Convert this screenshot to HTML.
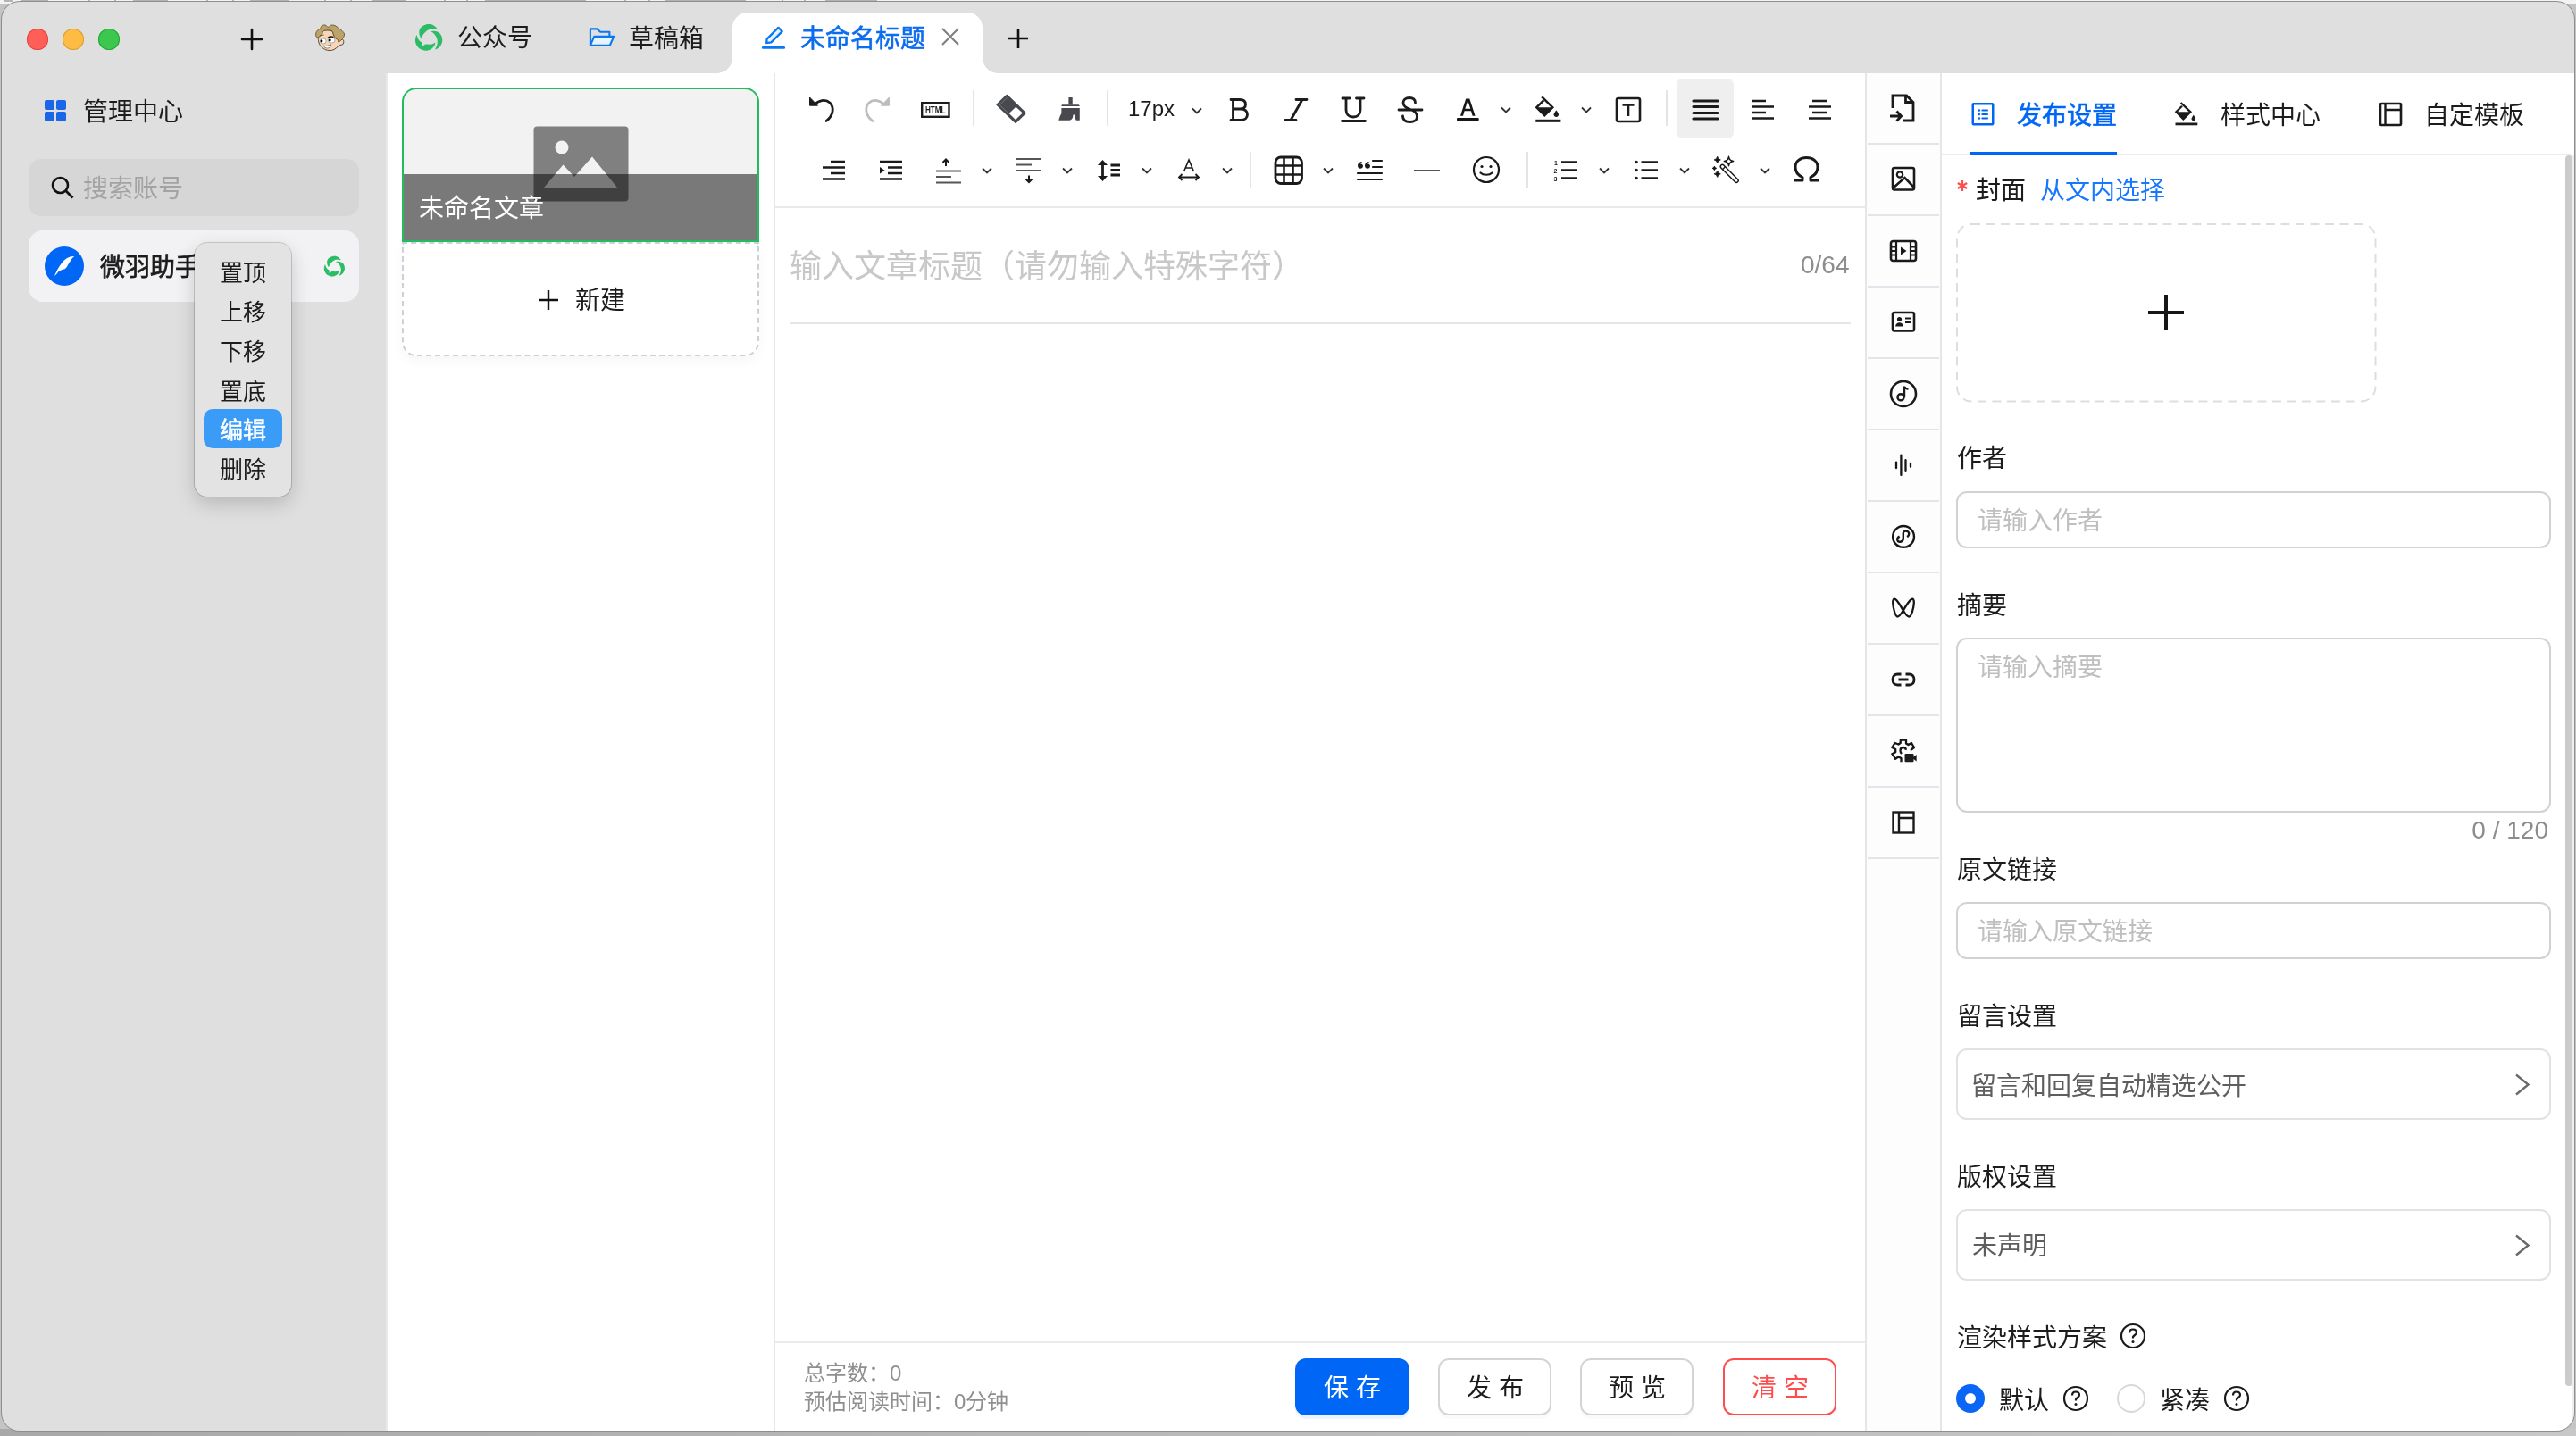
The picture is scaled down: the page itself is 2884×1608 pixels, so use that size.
<!DOCTYPE html>
<html lang="zh-CN">
<head>
<meta charset="utf-8">
<style>
*{box-sizing:border-box;margin:0;padding:0}
html,body{width:2884px;height:1608px;overflow:hidden;background:#c4c4c4;font-family:"Liberation Sans",sans-serif;color:#1f1f1f}
.a{position:absolute}
.t{position:absolute;white-space:nowrap;line-height:1}
#ring{position:absolute;left:1px;top:1px;width:2882px;height:1602px;border-radius:21px;background:#8e8e8e}
#win{position:absolute;left:0;top:0;width:2884px;height:1608px;will-change:transform;clip-path:inset(2px 2px 6px 2px round 20px);background:#dfdfdf}
svg{position:absolute;overflow:visible}
</style>
</head>
<body>
<div class="a" style="left:0;top:0;width:2884px;height:4px;background:#f3f3f3"></div>
<div class="a" style="left:0;top:1600px;width:2884px;height:8px;background:linear-gradient(90deg,#a8a8a8,#b8b8b8 40%,#c8c8c8)"></div>
<div class="a" style="left:4px;top:0;width:11px;height:2px;background:#b4b4b4"></div><div class="a" style="left:23px;top:0;width:31px;height:2px;background:#b4b4b4"></div><div class="a" style="left:99px;top:0;width:2px;height:2px;background:#b4b4b4"></div><div class="a" style="left:128px;top:0;width:2px;height:2px;background:#b4b4b4"></div><div class="a" style="left:149px;top:0;width:39px;height:2px;background:#b4b4b4"></div><div class="a" style="left:231px;top:0;width:2px;height:2px;background:#b4b4b4"></div><div class="a" style="left:260px;top:0;width:2px;height:2px;background:#b4b4b4"></div><div class="a" style="left:280px;top:0;width:44px;height:2px;background:#b4b4b4"></div><div class="a" style="left:363px;top:0;width:2px;height:2px;background:#b4b4b4"></div><div class="a" style="left:392px;top:0;width:2px;height:2px;background:#b4b4b4"></div><div class="a" style="left:417px;top:0;width:37px;height:2px;background:#b4b4b4"></div><div class="a" style="left:497px;top:0;width:2px;height:2px;background:#b4b4b4"></div><div class="a" style="left:522px;top:0;width:2px;height:2px;background:#b4b4b4"></div><div class="a" style="left:543px;top:0;width:113px;height:2px;background:#b4b4b4"></div><div class="a" style="left:699px;top:0;width:2px;height:2px;background:#b4b4b4"></div><div class="a" style="left:726px;top:0;width:2px;height:2px;background:#b4b4b4"></div><div class="a" style="left:745px;top:0;width:90px;height:2px;background:#b4b4b4"></div><div class="a" style="left:875px;top:0;width:2px;height:2px;background:#b4b4b4"></div><div class="a" style="left:900px;top:0;width:2px;height:2px;background:#b4b4b4"></div><div class="a" style="left:924px;top:0;width:58px;height:2px;background:#b4b4b4"></div>
<div id="ring"></div>
<div id="win">
<!-- traffic lights -->
<div class="a" style="left:30px;top:32px;width:24px;height:24px;border-radius:50%;background:#ff5f57;box-shadow:inset 0 0 0 1px #e0443e"></div>
<div class="a" style="left:70px;top:32px;width:24px;height:24px;border-radius:50%;background:#febc45;box-shadow:inset 0 0 0 1px #dc9d28"></div>
<div class="a" style="left:110px;top:32px;width:24px;height:24px;border-radius:50%;background:#3cc84f;box-shadow:inset 0 0 0 1px #1fa532"></div>
<!-- plus -->
<svg style="left:270px;top:32px" width="24" height="24" viewBox="0 0 24 24"><path d="M12 1V23M1 12H23" stroke="#111" stroke-width="2.6" stroke-linecap="round"/></svg>
<!-- avatar -->
<svg style="left:350px;top:24px" width="40" height="38" viewBox="0 0 40 38">
<path d="M6.50 18.00 C6.05 19.42 6.47 21.50 6.80 23.00 C7.13 24.50 7.80 25.92 8.50 27.00 C9.20 28.08 10.00 28.72 11.00 29.50 C12.00 30.28 13.17 31.18 14.50 31.70 C15.83 32.22 17.42 32.63 19.00 32.60 C20.58 32.57 22.42 32.27 24.00 31.50 C25.58 30.73 27.33 28.83 28.50 28.00 C29.67 27.17 30.08 26.92 31.00 26.50 C31.92 26.08 33.37 26.17 34.00 25.50 C34.63 24.83 34.88 23.42 34.80 22.50 C34.72 21.58 34.30 20.33 33.50 20.00 C32.70 19.67 31.08 20.67 30.00 20.50 C28.92 20.33 28.00 19.75 27.00 19.00 C26.00 18.25 25.00 17.42 24.00 16.00 C23.00 14.58 23.00 11.45 21.00 10.50 C19.00 9.55 13.92 9.63 12.00 10.30 C10.08 10.97 10.42 13.22 9.50 14.50 C8.58 15.78 6.95 16.58 6.50 18.00Z" fill="#f6d6b8" stroke="#4a3a2a" stroke-width="0.9"/>
<path d="M4.00 17.00 C3.55 16.20 3.55 14.17 3.80 13.00 C4.05 11.83 4.63 10.92 5.50 10.00 C6.37 9.08 8.25 8.33 9.00 7.50 C9.75 6.67 9.17 5.58 10.00 5.00 C10.83 4.42 12.75 3.78 14.00 4.00 C15.25 4.22 16.42 6.27 17.50 6.30 C18.58 6.33 19.25 4.50 20.50 4.20 C21.75 3.90 23.58 3.95 25.00 4.50 C26.42 5.05 27.67 6.50 29.00 7.50 C30.33 8.50 31.92 9.42 33.00 10.50 C34.08 11.58 35.25 12.75 35.50 14.00 C35.75 15.25 35.08 16.83 34.50 18.00 C33.92 19.17 32.95 20.13 32.00 21.00 C31.05 21.87 29.42 23.28 28.80 23.20 C28.18 23.12 28.85 21.20 28.30 20.50 C27.75 19.80 26.30 19.92 25.50 19.00 C24.70 18.08 24.08 16.33 23.50 15.00 C22.92 13.67 22.67 11.83 22.00 11.00 C21.33 10.17 21.08 10.08 19.50 10.00 C17.92 9.92 14.00 9.75 12.50 10.50 C11.00 11.25 11.17 13.58 10.50 14.50 C9.83 15.42 9.17 15.45 8.50 16.00 C7.83 16.55 7.25 17.63 6.50 17.80 C5.75 17.97 4.45 17.80 4.00 17.00Z" fill="#bca468" stroke="#5a4a2a" stroke-width="0.8"/>
<ellipse cx="11.8" cy="22" rx="3.4" ry="3" fill="#fff" stroke="#777" stroke-width="0.6"/><circle cx="10" cy="22" r="1.4" fill="#000"/>
<ellipse cx="21.2" cy="21" rx="3.9" ry="3.1" fill="#fff" stroke="#777" stroke-width="0.6"/><circle cx="19.3" cy="21" r="1.4" fill="#000"/>
<path d="M17 18.3 C19 17 21.5 16.8 23.5 17.6" fill="none" stroke="#111" stroke-width="1.4"/>
<path d="M8 16 C9.5 15.2 11 15 12.5 15.2" fill="none" stroke="#5a4a2a" stroke-width="1"/>
<path d="M12.3 27.3 C15 27.8 18 27 20.7 25.8 C20.5 28.5 19 30 16.5 30 C14.5 30 13 29.2 12.3 27.3Z" fill="#fff" stroke="#555" stroke-width="0.7"/>
</svg>
<!-- tab 公众号 -->
<svg style="left:460px;top:22px" width="40" height="40" viewBox="0 0 40 40"><g fill="#2bbd65"><path d="M11.56 20.89 C10.93 20.80 9.98 18.01 9.61 16.71 C9.24 15.41 9.17 14.30 9.33 13.09 C9.49 11.88 9.91 10.49 10.58 9.47 C11.26 8.45 12.35 7.64 13.37 6.96 C14.39 6.29 15.60 5.76 16.71 5.43 C17.83 5.11 18.90 5.01 20.06 5.01 C21.22 5.01 22.56 5.06 23.68 5.43 C24.79 5.80 25.74 6.38 26.74 7.24 C27.74 8.10 29.76 10.12 29.67 10.58 C29.57 11.05 27.32 10.10 26.18 10.03 C25.05 9.96 23.96 9.94 22.84 10.17 C21.73 10.40 20.61 10.79 19.50 11.42 C18.38 12.05 17.18 12.95 16.16 13.93 C15.13 14.90 14.14 16.11 13.37 17.27 C12.60 18.43 12.19 20.98 11.56 20.89Z"/><path d="M22.28 13.37 C22.47 13.09 24.51 12.81 25.63 12.81 C26.74 12.81 27.90 13.00 28.97 13.37 C30.04 13.74 31.15 14.25 32.03 15.04 C32.92 15.83 33.73 16.95 34.26 18.11 C34.80 19.27 35.14 20.71 35.24 22.01 C35.33 23.31 35.21 24.61 34.82 25.91 C34.42 27.21 33.66 28.74 32.87 29.81 C32.08 30.87 31.01 31.75 30.08 32.31 C29.16 32.87 27.48 33.61 27.30 33.15 C27.11 32.68 28.55 30.87 28.97 29.53 C29.39 28.18 29.81 26.56 29.81 25.07 C29.81 23.58 29.48 22.01 28.97 20.61 C28.46 19.22 27.48 17.73 26.74 16.71 C26.00 15.69 25.26 15.04 24.51 14.48 C23.77 13.93 22.10 13.65 22.28 13.37Z"/><path d="M6.55 17.27 C6.13 17.22 5.55 19.50 5.29 20.61 C5.04 21.73 4.92 22.79 5.01 23.96 C5.11 25.12 5.34 26.42 5.85 27.58 C6.36 28.74 7.20 29.99 8.08 30.92 C8.96 31.85 9.98 32.54 11.14 33.15 C12.30 33.75 13.74 34.31 15.04 34.54 C16.34 34.77 17.69 34.77 18.94 34.54 C20.19 34.31 21.45 33.84 22.56 33.15 C23.68 32.45 24.84 31.57 25.63 30.36 C26.42 29.16 27.48 26.44 27.30 25.91 C27.11 25.37 25.53 26.86 24.51 27.16 C23.49 27.46 22.28 27.65 21.17 27.72 C20.06 27.79 18.71 27.55 17.83 27.58 C16.95 27.60 16.76 27.48 15.88 27.86 C15.00 28.23 13.05 30.08 12.53 29.81 C12.02 29.53 13.23 27.16 12.81 26.18 C12.40 25.21 10.86 24.84 10.03 23.96 C9.19 23.07 8.38 22.01 7.80 20.89 C7.22 19.78 6.96 17.32 6.55 17.27Z"/></g></svg>
<div class="t" style="left:512px;top:29px;font-size:28px;color:#1c1c1c">公众号</div>
<!-- folder -->
<svg style="left:654px;top:24px" width="40" height="36" viewBox="0 0 40 36">
<path d="M6.9 26.8 V8.4 H14.4 L18.2 11.8 H28.4 V16.6" fill="none" stroke="#0a78f5" stroke-width="2.1" stroke-linejoin="round"/>
<path d="M11.2 16.9 H33.2 L28.8 26.8 H6.9 Z" fill="#e6f4ff" stroke="#0a78f5" stroke-width="2.1" stroke-linejoin="round"/>
</svg>
<div class="t" style="left:704px;top:30px;font-size:28px;color:#1c1c1c">草稿箱</div>
<!-- active tab -->
<div class="a" style="left:820px;top:14px;width:280px;height:70px;background:#fff;border-radius:17px 17px 0 0"></div>
<div class="a" style="left:803px;top:65px;width:17px;height:17px;background:radial-gradient(circle at 0 0,transparent 16.5px,#fff 17px)"></div>
<div class="a" style="left:1100px;top:65px;width:17px;height:17px;background:radial-gradient(circle at 100% 0,transparent 16.5px,#fff 17px)"></div>
<svg style="left:848px;top:24px" width="40" height="36" viewBox="0 0 40 36"><path d="M23.4 6.9 L27.7 11.1 L15.4 23.4 L10.2 24.2 L10.6 19.6Z" fill="#e8f3fe" stroke="#0a78f5" stroke-width="2.3" stroke-linejoin="round"/><path d="M6.2 29.4 H29.8" stroke="#0a78f5" stroke-width="2.6" stroke-linecap="round"/></svg>
<div class="t" style="left:896px;top:30px;font-size:28px;color:#0b6cf0;-webkit-text-stroke:0.6px #0b6cf0">未命名标题</div>
<svg style="left:1054px;top:31px" width="20" height="20" viewBox="0 0 20 20"><path d="M1 1L19 19M19 1L1 19" stroke="#808080" stroke-width="2.2"/></svg>
<svg style="left:1128px;top:31px" width="24" height="24" viewBox="0 0 24 24"><path d="M12 1V23M1 12H23" stroke="#111" stroke-width="2.6"/></svg>

<!-- sidebar -->
<div class="a" style="left:50px;top:112px;width:24px;height:24px">
 <div class="a" style="left:0;top:0;width:10.5px;height:10.5px;background:#1a66e8;border-radius:2px"></div>
 <div class="a" style="left:13px;top:0;width:10.5px;height:10.5px;background:#1a66e8;border-radius:2px"></div>
 <div class="a" style="left:0;top:13px;width:10.5px;height:10.5px;background:#1a66e8;border-radius:2px"></div>
 <div class="a" style="left:13px;top:13px;width:10.5px;height:10.5px;background:#1a66e8;border-radius:2px"></div>
</div>
<div class="t" style="left:93px;top:112px;font-size:28px;color:#1c1c1c">管理中心</div>
<div class="a" style="left:32px;top:178px;width:370px;height:64px;background:#d6d6d6;border-radius:14px"></div>
<svg style="left:57px;top:197px" width="26" height="26" viewBox="0 0 26 26"><circle cx="10.5" cy="10.5" r="8.5" fill="none" stroke="#111" stroke-width="2.6"/><path d="M16.8 16.8L24.5 24.5" stroke="#111" stroke-width="2.8"/></svg>
<div class="t" style="left:93px;top:198px;font-size:28px;color:#a3a3a3">搜索账号</div>
<div class="a" style="left:32px;top:258px;width:370px;height:80px;background:#f2f2f4;border-radius:16px"></div>
<div class="a" style="left:50px;top:276px;width:44px;height:44px;border-radius:50%;background:#0066f5"></div>
<svg style="left:50px;top:276px" width="44" height="44" viewBox="0 0 44 44"><path d="M11.20 32.80 C11.13 32.42 12.40 29.80 13.00 28.50 C13.60 27.20 14.13 26.17 14.80 25.00 C15.47 23.83 16.27 22.58 17.00 21.50 C17.73 20.42 18.45 19.45 19.20 18.50 C19.95 17.55 20.65 16.65 21.50 15.80 C22.35 14.95 23.12 14.13 24.30 13.40 C25.48 12.67 27.15 11.80 28.60 11.40 C30.05 11.00 32.60 10.73 33.00 11.00 C33.40 11.27 31.55 12.37 31.00 13.00 C30.45 13.63 30.40 13.70 29.70 14.80 C29.00 15.90 27.83 17.97 26.80 19.60 C25.77 21.23 24.77 23.48 23.50 24.60 C22.23 25.72 20.52 25.75 19.20 26.30 C17.88 26.85 16.57 27.15 15.60 27.90 C14.63 28.65 14.13 29.98 13.40 30.80 C12.67 31.62 11.27 33.18 11.20 32.80Z" fill="#fff"/></svg>
<div class="t" style="left:112px;top:286px;font-size:28px;color:#1c1c1c;-webkit-text-stroke:0.7px #1c1c1c">微羽助手</div>
<svg style="left:358.6px;top:282.7px" width="30.6" height="30.6" viewBox="0 0 40 40"><g fill="#2bbd65"><path d="M11.56 20.89 C10.93 20.80 9.98 18.01 9.61 16.71 C9.24 15.41 9.17 14.30 9.33 13.09 C9.49 11.88 9.91 10.49 10.58 9.47 C11.26 8.45 12.35 7.64 13.37 6.96 C14.39 6.29 15.60 5.76 16.71 5.43 C17.83 5.11 18.90 5.01 20.06 5.01 C21.22 5.01 22.56 5.06 23.68 5.43 C24.79 5.80 25.74 6.38 26.74 7.24 C27.74 8.10 29.76 10.12 29.67 10.58 C29.57 11.05 27.32 10.10 26.18 10.03 C25.05 9.96 23.96 9.94 22.84 10.17 C21.73 10.40 20.61 10.79 19.50 11.42 C18.38 12.05 17.18 12.95 16.16 13.93 C15.13 14.90 14.14 16.11 13.37 17.27 C12.60 18.43 12.19 20.98 11.56 20.89Z"/><path d="M22.28 13.37 C22.47 13.09 24.51 12.81 25.63 12.81 C26.74 12.81 27.90 13.00 28.97 13.37 C30.04 13.74 31.15 14.25 32.03 15.04 C32.92 15.83 33.73 16.95 34.26 18.11 C34.80 19.27 35.14 20.71 35.24 22.01 C35.33 23.31 35.21 24.61 34.82 25.91 C34.42 27.21 33.66 28.74 32.87 29.81 C32.08 30.87 31.01 31.75 30.08 32.31 C29.16 32.87 27.48 33.61 27.30 33.15 C27.11 32.68 28.55 30.87 28.97 29.53 C29.39 28.18 29.81 26.56 29.81 25.07 C29.81 23.58 29.48 22.01 28.97 20.61 C28.46 19.22 27.48 17.73 26.74 16.71 C26.00 15.69 25.26 15.04 24.51 14.48 C23.77 13.93 22.10 13.65 22.28 13.37Z"/><path d="M6.55 17.27 C6.13 17.22 5.55 19.50 5.29 20.61 C5.04 21.73 4.92 22.79 5.01 23.96 C5.11 25.12 5.34 26.42 5.85 27.58 C6.36 28.74 7.20 29.99 8.08 30.92 C8.96 31.85 9.98 32.54 11.14 33.15 C12.30 33.75 13.74 34.31 15.04 34.54 C16.34 34.77 17.69 34.77 18.94 34.54 C20.19 34.31 21.45 33.84 22.56 33.15 C23.68 32.45 24.84 31.57 25.63 30.36 C26.42 29.16 27.48 26.44 27.30 25.91 C27.11 25.37 25.53 26.86 24.51 27.16 C23.49 27.46 22.28 27.65 21.17 27.72 C20.06 27.79 18.71 27.55 17.83 27.58 C16.95 27.60 16.76 27.48 15.88 27.86 C15.00 28.23 13.05 30.08 12.53 29.81 C12.02 29.53 13.23 27.16 12.81 26.18 C12.40 25.21 10.86 24.84 10.03 23.96 C9.19 23.07 8.38 22.01 7.80 20.89 C7.22 19.78 6.96 17.32 6.55 17.27Z"/></g></svg>
<!-- context menu -->
<div class="a" style="left:218px;top:272px;width:108px;height:284px;background:#e3e3e3;border-radius:14px;box-shadow:0 0 0 1px rgba(0,0,0,0.16),0 8px 22px rgba(0,0,0,0.18)"></div>
<div class="a" style="left:228px;top:458px;width:88px;height:44px;background:#3b9cf7;border-radius:10px"></div>
<div class="t" style="left:246px;top:293px;font-size:26px;color:#1c1c1c">置顶</div>
<div class="t" style="left:246px;top:337px;font-size:26px;color:#1c1c1c">上移</div>
<div class="t" style="left:246px;top:381px;font-size:26px;color:#1c1c1c">下移</div>
<div class="t" style="left:246px;top:426px;font-size:26px;color:#1c1c1c">置底</div>
<div class="t" style="left:246px;top:469px;font-size:26px;color:#fff;-webkit-text-stroke:0.5px #fff">编辑</div>
<div class="t" style="left:246px;top:513px;font-size:26px;color:#1c1c1c">删除</div>
<!-- list panel -->
<div class="a" style="left:432px;top:82px;width:2px;height:1526px;background:#e9e9e9"></div>
<div class="a" style="left:434px;top:82px;width:432px;height:1526px;background:#fff"></div>
<div class="a" style="left:866px;top:82px;width:2px;height:1526px;background:#e8e8e8"></div>
<div class="a" style="left:450px;top:98px;width:400px;height:173px;border:2px solid #1fbd5d;border-bottom:none;border-radius:16px 16px 0 0;background:#f2f2f2;overflow:hidden">
 <svg style="left:145px;top:41px" width="108" height="86" viewBox="0 0 108 86">
  <rect x="0.5" y="0.5" width="106" height="84" rx="4" fill="#808080"/>
  <circle cx="32" cy="24" r="7.5" fill="#f2f2f2"/>
  <path d="M12 69 L33.5 43.5 L46 57 L66 34.5 L94 69Z" fill="#f2f2f2"/>
 </svg>
 <div class="a" style="left:0;top:95px;width:400px;height:80px;background:rgba(0,0,0,0.5)"></div>
 <div class="t" style="left:17px;top:120px;font-size:28px;color:#fff">未命名文章</div>
</div>
<div class="a" style="left:450px;top:271px;width:400px;height:128px;border:2px dashed #ccd0d7;border-radius:0 0 16px 16px;box-shadow:0 6px 14px rgba(0,0,0,0.035)"></div>
<div class="a" style="left:450px;top:269px;width:400px;height:2px;background:#1fbd5d"></div>
<svg style="left:602px;top:324px" width="24" height="24" viewBox="0 0 24 24"><path d="M12 1V23M1 12H23" stroke="#111" stroke-width="2.4"/></svg>
<div class="t" style="left:644px;top:323px;font-size:28px;color:#1c1c1c">新建</div>

<!--LIST-->
<!-- editor area -->
<div class="a" style="left:868px;top:82px;width:1220px;height:1526px;background:#fff"></div>
<div class="a" style="left:868px;top:231px;width:1220px;height:2px;background:#e9e9e9"></div>
<div class="a" style="left:1877px;top:88px;width:64px;height:67px;background:#efefef;border-radius:7px"></div>
<!-- separators row1 -->
<div class="a" style="left:1089px;top:101px;width:2px;height:40px;background:#e4e4e4"></div>
<div class="a" style="left:1239px;top:101px;width:2px;height:40px;background:#e4e4e4"></div>
<div class="a" style="left:1865px;top:101px;width:2px;height:40px;background:#e4e4e4"></div>
<!-- separators row2 -->
<div class="a" style="left:1399px;top:170px;width:2px;height:40px;background:#e4e4e4"></div>
<div class="a" style="left:1709px;top:170px;width:2px;height:40px;background:#e4e4e4"></div>
<!-- row1 icons -->
<svg style="left:904px;top:107px" width="30" height="32" viewBox="0 0 30 32"><path d="M8.5 10 C12 5.5 20 3.5 25 8 C30 13 29.5 22 21 28.5" fill="none" stroke="#1c1c1c" stroke-width="2.8" stroke-linecap="round"/><path d="M2.5 2 L2.5 11.2 L11.5 11.2Z" fill="#1c1c1c" stroke="#1c1c1c" stroke-width="1" stroke-linejoin="round"/></svg>
<svg style="left:968px;top:107px" width="30" height="32" viewBox="0 0 30 32"><g transform="translate(30 0) scale(-1 1)"><path d="M8.5 10 C12 5.5 20 3.5 25 8 C30 13 29.5 22 21 28.5" fill="none" stroke="#bdbdbd" stroke-width="2.8" stroke-linecap="round"/><path d="M2.5 2 L2.5 11.2 L11.5 11.2Z" fill="#bdbdbd" stroke="#bdbdbd" stroke-width="1" stroke-linejoin="round"/></g></svg>
<svg style="left:1031px;top:114px" width="33" height="18" viewBox="0 0 33 18"><rect x="1.2" y="1.2" width="30.3" height="15.6" fill="none" stroke="#1c1c1c" stroke-width="2.4"/><text x="5" y="13.1" font-family="Liberation Sans" font-weight="700" font-size="11.5" fill="#1c1c1c" textLength="22.5" lengthAdjust="spacingAndGlyphs">HTML</text></svg>
<svg style="left:1115px;top:105px" width="35" height="35" viewBox="0 0 35 35"><path d="M12.3 1.8 L1.5 12.2 L22 32 L32.6 21.6Z" fill="#48484f" stroke="#48484f" stroke-width="2.2" stroke-linejoin="round"/><path d="M22.4 14.7 L14.7 22.1 L22 29.1 L29.8 21.6Z" fill="#fff"/><path d="M12.6 4.2 L4.2 12.5 L14.2 22" fill="none" stroke="#85858b" stroke-width="0.7"/></svg>
<svg style="left:1180px;top:102px" width="40" height="40" viewBox="0 0 40 40"><rect x="16.4" y="7" width="4.35" height="8.6" rx="0.4" fill="#48484f"/><path d="M8.2 16.9 L9 15.2 H27.8 L28.8 16.9Z" fill="#48484f"/><path d="M8.4 19.1 H28.8 V32.7 H24.8 C24 31.5 23.5 29 23 26.5 H21.5 C21.3 29 21 30.5 19.5 31.7 C18.8 32.4 18 32.7 17 32.7 H5.3 C6 30 7 27 8.4 25Z" fill="#48484f"/></svg>
<div class="t" style="left:1263px;top:110px;font-size:24px;color:#1c1c1c;font-family:'Liberation Sans',sans-serif">17px</div>
<svg style="left:1334px;top:120px" width="12" height="8" viewBox="0 0 12 8"><path d="M1 1.5L6 6.5L11 1.5" fill="none" stroke="#333" stroke-width="1.8"/></svg>
<!-- B -->
<svg style="left:1376px;top:109px" width="22" height="28" viewBox="0 0 22 28"><path d="M2 2.5 H4.5 V25.5 H2 M4.5 2.5 H12 C16.5 2.5 18.5 5 18.5 8 C18.5 11 16.5 13 12 13 H4.5 M4.5 13 H13 C18 13 20.5 16 20.5 19.2 C20.5 22.8 18 25.5 13 25.5 H4.5" fill="none" stroke="#1c1c1c" stroke-width="2.8" stroke-linecap="round" stroke-linejoin="round"/></svg>
<!-- I -->
<svg style="left:1437px;top:109px" width="28" height="28" viewBox="0 0 28 28"><path d="M14 2.5 H26 M2 25.5 H14 M21 2.5 L8 25.5" fill="none" stroke="#1c1c1c" stroke-width="2.8" stroke-linecap="round"/></svg>
<!-- U -->
<svg style="left:1501px;top:108px" width="29" height="30" viewBox="0 0 29 30"><path d="M2 2 H10 M17.5 2 H26 M6 2 V15 C6 20 9 23 14 23 C19 23 22 20 22 15 V2 M1.5 27.5 H27.5" fill="none" stroke="#1c1c1c" stroke-width="2.8" stroke-linecap="round"/></svg>
<!-- S -->
<svg style="left:1564px;top:108px" width="30" height="30" viewBox="0 0 30 30"><path d="M20.5 7 C20.5 3.5 18 1.5 14 1.5 C9.5 1.5 7 3.8 7 7 C7 11 10 12.5 15 14.5 C20.5 16.5 22.5 19 22.5 22.5 C22.5 26 19.5 28.5 14.5 28.5 C10 28.5 6.5 26.5 6.5 22 M2 15 H28" fill="none" stroke="#1c1c1c" stroke-width="2.8" stroke-linecap="round"/></svg>
<!-- A color -->
<svg style="left:1624px;top:102px" width="40" height="40" viewBox="0 0 40 40"><path d="M11 27.7 L17.2 8.4 H21.3 L27.6 27.7 H24.6 L23 22.2 H15.6 L14 27.7Z M16.3 19.8 H22.3 L19.3 10.8Z" fill="#161616" fill-rule="evenodd"/><rect x="7" y="30" width="24.7" height="3.2" rx="1" fill="#161616"/></svg>
<svg style="left:1680px;top:119px" width="12" height="8" viewBox="0 0 12 8"><path d="M1 1.5L6 6.5L11 1.5" fill="none" stroke="#333" stroke-width="1.8"/></svg>
<!-- bucket -->
<svg style="left:1714px;top:102px" width="40" height="40" viewBox="0 0 40 40"><path d="M12.2 6.3 L24.2 18.2 L15.3 27.1 L6.4 18.2 L14.2 10.4" fill="none" stroke="#1c1c1c" stroke-width="2.6" stroke-linejoin="miter"/><path d="M6.4 18.2 H24.2 L15.3 27.1Z" fill="#1c1c1c"/><path d="M28.4 21.4 C29.8 23.2 31 25 31 26.3 C31 27.9 29.8 28.9 28.3 28.9 C26.8 28.9 25.6 27.9 25.6 26.3 C25.6 25 26.9 23.2 28.4 21.4Z" fill="#1c1c1c"/><rect x="5.3" y="31.8" width="28.1" height="3" fill="#1c1c1c"/></svg>
<svg style="left:1770px;top:119px" width="12" height="8" viewBox="0 0 12 8"><path d="M1 1.5L6 6.5L11 1.5" fill="none" stroke="#333" stroke-width="1.8"/></svg>
<!-- T box -->
<svg style="left:1808px;top:108px" width="30" height="30" viewBox="0 0 30 30"><rect x="2" y="2" width="26" height="26" rx="2" fill="none" stroke="#1c1c1c" stroke-width="2.6"/><path d="M8.5 9.5 H21.5 M15 9.5 V22" stroke="#1c1c1c" stroke-width="2.6"/></svg>
<!-- justify -->
<svg style="left:1893px;top:110px" width="32" height="26" viewBox="0 0 32 26"><path d="M3 3 H30 M3 9.5 H30 M3 16.5 H30 M3 23 H30" stroke="#1a1a1a" stroke-width="3.2" stroke-linecap="round"/></svg>
<!-- left align -->
<svg style="left:1960px;top:111px" width="27" height="24" viewBox="0 0 27 24"><path d="M1 2 H17 M1 8.5 H26 M1 15 H17 M1 21.5 H26" stroke="#1a1a1a" stroke-width="2.6"/></svg>
<!-- center -->
<svg style="left:2024px;top:111px" width="27" height="24" viewBox="0 0 27 24"><path d="M5 2 H21 M1 8.5 H26 M5 15 H21 M1 21.5 H26" stroke="#1a1a1a" stroke-width="2.6"/></svg>
<!-- row2 -->
<svg style="left:920px;top:179px" width="27" height="24" viewBox="0 0 27 24"><path d="M10 2 H26 M1 8.5 H26 M10 15 H26 M1 21.5 H26" stroke="#1a1a1a" stroke-width="2.6"/></svg>
<svg style="left:984px;top:179px" width="27" height="24" viewBox="0 0 27 24"><path d="M1 2 H26 M10 8.5 H26 M10 15 H26 M1 21.5 H26" stroke="#1a1a1a" stroke-width="2.6"/><path d="M1 8 L6.5 11.8 L1 15.5Z" fill="#1a1a1a"/></svg>
<svg style="left:1047px;top:176px" width="30" height="30" viewBox="0 0 30 30"><path d="M12 10 V2.5 M8.5 6 L12 2.5 L15.5 6" fill="none" stroke="#1a1a1a" stroke-width="2"/><path d="M1 15.5 H29 M1 22 H18 M1 28.5 H29" stroke="#555" stroke-width="2.2"/></svg>
<svg style="left:1099px;top:187px" width="12" height="8" viewBox="0 0 12 8"><path d="M1 1.5L6 6.5L11 1.5" fill="none" stroke="#333" stroke-width="1.8"/></svg>
<svg style="left:1137px;top:176px" width="30" height="31" viewBox="0 0 30 31"><path d="M1 2 H29 M1 8.5 H18 M1 15 H29" stroke="#555" stroke-width="2.2"/><path d="M15 20.5 V28 M11.5 24.5 L15 28 L18.5 24.5" fill="none" stroke="#1a1a1a" stroke-width="2"/></svg>
<svg style="left:1189px;top:187px" width="12" height="8" viewBox="0 0 12 8"><path d="M1 1.5L6 6.5L11 1.5" fill="none" stroke="#333" stroke-width="1.8"/></svg>
<svg style="left:1228px;top:178px" width="27" height="26" viewBox="0 0 27 26"><path d="M6.5 4 V22" stroke="#1a1a1a" stroke-width="2.8"/><path d="M1 7 L6.5 1 L12 7Z M1 19 L6.5 25 L12 19Z" fill="#1a1a1a"/><path d="M15.5 7 H26 M15.5 12.5 H26 M15.5 18 H26" stroke="#1a1a1a" stroke-width="2.8"/></svg>
<svg style="left:1278px;top:187px" width="12" height="8" viewBox="0 0 12 8"><path d="M1 1.5L6 6.5L11 1.5" fill="none" stroke="#333" stroke-width="1.8"/></svg>
<svg style="left:1318px;top:178px" width="26" height="26" viewBox="0 0 26 26"><path d="M7.5 14 L13 1 L18.5 14 M9.5 10 H16.5" fill="none" stroke="#1a1a1a" stroke-width="1.6"/><path d="M2 20.5 H24 M5.5 17 L2 20.5 L5.5 24 M20.5 17 L24 20.5 L20.5 24" fill="none" stroke="#1a1a1a" stroke-width="1.8"/></svg>
<svg style="left:1368px;top:187px" width="12" height="8" viewBox="0 0 12 8"><path d="M1 1.5L6 6.5L11 1.5" fill="none" stroke="#333" stroke-width="1.8"/></svg>
<svg style="left:1426px;top:174px" width="34" height="34" viewBox="0 0 34 34"><rect x="2" y="2" width="29.5" height="29.5" rx="6" fill="none" stroke="#1a1a1a" stroke-width="2.8"/><path d="M11.5 2 V31.5 M21.5 2 V31.5 M2 11.5 H31.5 M2 21.5 H31.5" stroke="#1a1a1a" stroke-width="2.6"/></svg>
<svg style="left:1481px;top:187px" width="12" height="8" viewBox="0 0 12 8"><path d="M1 1.5L6 6.5L11 1.5" fill="none" stroke="#333" stroke-width="1.8"/></svg>
<svg style="left:1519px;top:178px" width="29" height="26" viewBox="0 0 29 26"><path d="M5 3 C2.5 3.5 1 5.5 1 7.5 C1 9.5 2.3 10.8 4 10.8 C5.7 10.8 7 9.5 7 8 C7 6.3 5.8 5.3 4.3 5.4 C4.6 4.4 5.3 3.8 6.2 3.5Z M13 3 C10.5 3.5 9 5.5 9 7.5 C9 9.5 10.3 10.8 12 10.8 C13.7 10.8 15 9.5 15 8 C15 6.3 13.8 5.3 12.3 5.4 C12.6 4.4 13.3 3.8 14.2 3.5Z" fill="#1a1a1a"/><path d="M18 2 H28 M18 9 H28 M1 16 H28 M1 23 H28" stroke="#1a1a1a" stroke-width="2.2" stroke-linecap="round"/></svg>
<div class="a" style="left:1583px;top:190px;width:29px;height:2px;background:#555"></div>
<svg style="left:1648px;top:174px" width="32" height="32" viewBox="0 0 32 32"><circle cx="16" cy="16" r="14" fill="none" stroke="#1a1a1a" stroke-width="2.2"/><circle cx="11" cy="12.5" r="1.6" fill="#1a1a1a"/><circle cx="21" cy="12.5" r="1.6" fill="#1a1a1a"/><path d="M9.5 19.5 C12.5 22.5 19.5 22.5 22.5 19.5" fill="none" stroke="#1a1a1a" stroke-width="2.2" stroke-linecap="round"/></svg>
<svg style="left:1739px;top:178px" width="28" height="25" viewBox="0 0 28 25"><path d="M9 3.5 H26 M9 12.5 H26 M9 21.5 H26" stroke="#1a1a1a" stroke-width="2.4"/><text x="1" y="6.5" font-family="Liberation Sans" font-weight="700" font-size="7" fill="#1a1a1a">1</text><text x="0.5" y="15.5" font-family="Liberation Sans" font-weight="700" font-size="7" fill="#1a1a1a">2</text><text x="0.5" y="24.5" font-family="Liberation Sans" font-weight="700" font-size="7" fill="#1a1a1a">3</text></svg>
<svg style="left:1790px;top:187px" width="12" height="8" viewBox="0 0 12 8"><path d="M1 1.5L6 6.5L11 1.5" fill="none" stroke="#333" stroke-width="1.8"/></svg>
<svg style="left:1829px;top:178px" width="28" height="25" viewBox="0 0 28 25"><circle cx="3" cy="3.5" r="1.8" fill="#1a1a1a"/><circle cx="3" cy="12.5" r="1.8" fill="#1a1a1a"/><circle cx="3" cy="21.5" r="1.8" fill="#1a1a1a"/><path d="M8.5 3.5 H27 M8.5 12.5 H27 M8.5 21.5 H27" stroke="#1a1a1a" stroke-width="2.4"/></svg>
<svg style="left:1880px;top:187px" width="12" height="8" viewBox="0 0 12 8"><path d="M1 1.5L6 6.5L11 1.5" fill="none" stroke="#333" stroke-width="1.8"/></svg>
<svg style="left:1912px;top:170px" width="40" height="40" viewBox="0 0 40 40"><path d="M10.7 5.300000000000001 Q11.24 8.36 14.299999999999999 8.9 Q11.24 9.44 10.7 12.5 Q10.16 9.44 7.1 8.9 Q10.16 8.36 10.7 5.300000000000001Z M7.4 16.099999999999998 Q7.75 18.05 9.7 18.4 Q7.75 18.74 7.4 20.7 Q7.06 18.74 5.1000000000000005 18.4 Q7.06 18.05 7.4 16.099999999999998Z M10.7 21.2 Q11.24 24.26 14.299999999999999 24.8 Q11.24 25.34 10.7 28.400000000000002 Q10.16 25.34 7.1 24.8 Q10.16 24.26 10.7 21.2Z" fill="#161616" stroke="#161616" stroke-width="0.9" stroke-linejoin="round"/><path d="M23.5 5.3 Q24.12 9.88 28.7 10.5 Q24.12 11.12 23.5 15.7 Q22.88 11.12 18.3 10.5 Q22.88 9.88 23.5 5.3Z" fill="none" stroke="#161616" stroke-width="1.4" stroke-linejoin="round"/><g transform="rotate(45 24.2 24.4)"><rect x="11" y="22.3" width="26.4" height="4.2" rx="2.1" fill="none" stroke="#161616" stroke-width="1.4"/><path d="M15.4 22.3 V26.5" stroke="#161616" stroke-width="1.4"/></g></svg>
<svg style="left:1970px;top:187px" width="12" height="8" viewBox="0 0 12 8"><path d="M1 1.5L6 6.5L11 1.5" fill="none" stroke="#333" stroke-width="1.8"/></svg>
<svg style="left:2007px;top:175px" width="32" height="30" viewBox="0 0 32 30"><path d="M2 27 H11 V23.5 C5.5 21 3 16.5 3 12 C3 5.5 8.5 1.5 15.5 1.5 C22.5 1.5 28 5.5 28 12 C28 16.5 25.5 21 20 23.5 V27 H30" fill="none" stroke="#1a1a1a" stroke-width="3" stroke-linejoin="round"/></svg>
<!-- title -->
<div class="t" style="left:884px;top:281px;font-size:36px;color:#c8c8c8">输入文章标题（请勿输入特殊字符）</div>
<div class="t" style="left:2016px;top:283px;font-size:28px;color:#8e8e8e">0/64</div>
<div class="a" style="left:884px;top:361px;width:1188px;height:2px;background:#e6e6e6"></div>
<!-- footer -->
<div class="a" style="left:868px;top:1502px;width:1220px;height:2px;background:#ebebeb"></div>
<div class="t" style="left:900px;top:1526px;font-size:24px;color:#8f8f8f">总字数：0</div>
<div class="t" style="left:900px;top:1558px;font-size:24px;color:#8f8f8f">预估阅读时间：0分钟</div>
<div class="a" style="left:1450px;top:1521px;width:128px;height:64px;background:#0066f5;border-radius:12px;box-shadow:0 4px 0 rgba(5,120,255,0.08)"></div>
<div class="t" style="left:1482px;top:1541px;font-size:28px;color:#fff;letter-spacing:8px">保存</div>
<div class="a" style="left:1610px;top:1521px;width:127px;height:64px;border:2px solid #d4d4d4;border-radius:12px;box-shadow:0 4px 0 rgba(0,0,0,0.02)"></div>
<div class="t" style="left:1642px;top:1541px;font-size:28px;color:#1c1c1c;letter-spacing:8px">发布</div>
<div class="a" style="left:1769px;top:1521px;width:127px;height:64px;border:2px solid #d4d4d4;border-radius:12px;box-shadow:0 4px 0 rgba(0,0,0,0.02)"></div>
<div class="t" style="left:1801px;top:1541px;font-size:28px;color:#1c1c1c;letter-spacing:8px">预览</div>
<div class="a" style="left:1929px;top:1521px;width:127px;height:64px;border:2px solid #ff4d4f;border-radius:12px;box-shadow:0 4px 0 rgba(0,0,0,0.02)"></div>
<div class="t" style="left:1961px;top:1541px;font-size:28px;color:#ff4d4f;letter-spacing:8px">清空</div>

<!-- icon bar -->
<div class="a" style="left:2088px;top:82px;width:2px;height:1526px;background:#e6e6e6"></div>
<div class="a" style="left:2090px;top:82px;width:82px;height:1526px;background:#fdfdfd"></div>
<div class="a" style="left:2172px;top:82px;width:2px;height:1526px;background:#e6e6e6"></div>
<div class="a" style="left:2091px;top:160px;width:80px;height:2px;background:#e4e5ea"></div>
<div class="a" style="left:2091px;top:240px;width:80px;height:2px;background:#e4e5ea"></div>
<div class="a" style="left:2091px;top:320px;width:80px;height:2px;background:#e4e5ea"></div>
<div class="a" style="left:2091px;top:400px;width:80px;height:2px;background:#e4e5ea"></div>
<div class="a" style="left:2091px;top:480px;width:80px;height:2px;background:#e4e5ea"></div>
<div class="a" style="left:2091px;top:560px;width:80px;height:2px;background:#e4e5ea"></div>
<div class="a" style="left:2091px;top:640px;width:80px;height:2px;background:#e4e5ea"></div>
<div class="a" style="left:2091px;top:720px;width:80px;height:2px;background:#e4e5ea"></div>
<div class="a" style="left:2091px;top:800px;width:80px;height:2px;background:#e4e5ea"></div>
<div class="a" style="left:2091px;top:880px;width:80px;height:2px;background:#e4e5ea"></div>
<div class="a" style="left:2091px;top:960px;width:80px;height:2px;background:#e4e5ea"></div>
<!-- 1 doc import -->
<svg style="left:2115px;top:105px" width="30" height="32" viewBox="0 0 30 32"><path d="M4 16 V2 H19.5 L27 9.5 V30 H16" fill="none" stroke="#1a1a1a" stroke-width="2.8"/><path d="M18.5 2 V9.5 H27" fill="none" stroke="#1a1a1a" stroke-width="2.8"/><path d="M1 25 H13 M8.5 19.5 L13.5 25 L8.5 30.5" fill="none" stroke="#1a1a1a" stroke-width="2.8"/></svg>
<!-- 2 image -->
<svg style="left:2117px;top:186px" width="28" height="29" viewBox="0 0 28 29"><rect x="2" y="2" width="24" height="24.5" rx="2" fill="none" stroke="#1a1a1a" stroke-width="2.6"/><circle cx="10" cy="9.5" r="3.2" fill="none" stroke="#1a1a1a" stroke-width="2.2"/><path d="M3 24 L15.5 13 L26 24" fill="none" stroke="#1a1a1a" stroke-width="2.6"/></svg>
<!-- 3 video -->
<svg style="left:2115px;top:268px" width="32" height="26" viewBox="0 0 32 26"><rect x="2" y="2" width="28" height="22" rx="2.5" fill="none" stroke="#1a1a1a" stroke-width="2.6"/><path d="M8 2 V24 M24 2 V24 M2 8.5 H8 M2 13 H8 M2 17.5 H8 M24 8.5 H30 M24 13 H30 M24 17.5 H30" stroke="#1a1a1a" stroke-width="2.2"/><path d="M13 8.5 L19.5 13 L13 17.5Z" fill="#1a1a1a"/></svg>
<!-- 4 id card -->
<svg style="left:2117px;top:348px" width="28" height="24" viewBox="0 0 28 24"><rect x="2" y="2" width="24" height="20.5" rx="2" fill="none" stroke="#1a1a1a" stroke-width="2.6"/><circle cx="9.5" cy="9.5" r="2.6" fill="#1a1a1a"/><path d="M5 17.5 C5.5 14.5 7.5 13.3 9.5 13.3 C11.5 13.3 13.5 14.5 14 17.5Z" fill="#1a1a1a"/><path d="M16 8.5 H22 M16 13 H22" stroke="#1a1a1a" stroke-width="2.2"/></svg>
<!-- 5 music -->
<svg style="left:2115px;top:425px" width="32" height="32" viewBox="0 0 32 32"><circle cx="16" cy="16" r="14" fill="none" stroke="#1a1a1a" stroke-width="2.6"/><path d="M17 7.5 V19.5 M17 8 C18 10 20 10.5 21.5 10.5" fill="none" stroke="#1a1a1a" stroke-width="2.4"/><circle cx="13" cy="19.8" r="3.6" fill="none" stroke="#1a1a1a" stroke-width="2.4"/></svg>
<!-- 6 audio -->
<svg style="left:2121px;top:507px" width="22" height="28" viewBox="0 0 22 28"><path d="M2 10.6 V17.1 M7.4 2.6 V24.9 M12.5 8.1 V19.9 M18 12 V15.8" stroke="#161616" stroke-width="2.3" stroke-linecap="round"/></svg>
<!-- 7 mini program -->
<svg style="left:2117px;top:586px" width="28" height="29" viewBox="0 0 28 29"><circle cx="14.05" cy="14.9" r="11.9" fill="none" stroke="#161616" stroke-width="2.4"/><path d="M9.6 14.6 C8 15.5 6.9 17 7.3 18.8 C7.7 20.4 9.2 21 10.7 20.7 C12.7 20.3 13.8 19.2 13.8 17 V11.2 C13.8 9.6 15 8.6 16.6 8.6 C18.6 8.6 20.3 9.8 20.3 11.6 C20.3 13.2 19.2 14.5 18.2 15.2" fill="none" stroke="#161616" stroke-width="2.4"/></svg>
<!-- 8 channels butterfly -->
<svg style="left:2117px;top:669px" width="28" height="24" viewBox="0 0 28 24"><path d="M13.8 14.5 C11 10 8 4 5 2 C3 1 2 3 2.2 6 C2.5 12 5 21.5 7.5 21.5 C9.5 21.5 12 17.5 13.8 14.5 C15.5 17.5 18 21.5 20.3 21.5 C23 21.5 25.5 12 25.8 6 C26 3 25 1 23 2 C20 4 16.5 10 13.8 14.5Z" fill="none" stroke="#161616" stroke-width="2.3" stroke-linejoin="round"/></svg>
<!-- 9 link -->
<svg style="left:2117px;top:752px" width="28" height="18" viewBox="0 0 28 18"><path d="M11.5 3 H7.5 C4 3 2 5.5 2 9 C2 12.5 4 15 7.5 15 H11.5 M16.5 3 H20.5 C24 3 26 5.5 26 9 C26 12.5 24 15 20.5 15 H16.5 M8.5 9 H19.5" fill="none" stroke="#1a1a1a" stroke-width="2.8"/></svg>
<!-- 10 gear video -->
<svg style="left:2117px;top:826px" width="30" height="29" viewBox="0 0 30 29"><path d="M11.5 27.3 L11.5 23.0 L8.5 21.5 L5.0 23.8 L2.8 19.8 L1.3 18.3 L5.2 16.3 L5.2 13.0 L1.3 11.0 L4.5 6.0 L8.5 7.5 L10.7 6.0 L10.8 2.5 L17.0 2.5 L17.0 6.5 L19.5 8.0 L23.0 6.0 L26.0 11.0 L22.8 13.5 L22.8 14.3" fill="none" stroke="#161616" stroke-width="2.3" stroke-linejoin="round"/><path d="M17 13.8 C16.5 11.5 15.5 11 14 11 C12 11 10.5 12.5 10.5 14.5 C10.5 16 11.2 17.2 12 18" fill="none" stroke="#161616" stroke-width="2.3"/><rect x="15.5" y="18" width="10" height="9.3" rx="1" fill="#1c1c1c"/><path d="M25 21.8 L28.7 19 V26.5 L25 23.8Z" fill="#1c1c1c"/></svg>
<!-- 11 template -->
<svg style="left:2118px;top:908px" width="26" height="26" viewBox="0 0 26 26"><rect x="1.5" y="1.5" width="23" height="23" fill="none" stroke="#1a1a1a" stroke-width="2.4"/><path d="M8 1.5 V24.5 M8 8 H24.5" stroke="#1a1a1a" stroke-width="2.4"/></svg>

<!-- right panel -->
<div class="a" style="left:2174px;top:82px;width:710px;height:1526px;background:#fff"></div>
<div class="a" style="left:2174px;top:172px;width:706px;height:2px;background:#ececec"></div>
<div class="a" style="left:2206px;top:170px;width:164px;height:4px;background:#0066f5"></div>
<svg style="left:2206px;top:114px" width="28" height="28" viewBox="0 0 28 28"><rect x="2.75" y="2.25" width="22.5" height="23" rx="0.8" fill="none" stroke="#0066f5" stroke-width="2.5"/><circle cx="9.8" cy="9.5" r="1.35" fill="#0066f5"/><circle cx="9.8" cy="14" r="1.35" fill="#0066f5"/><circle cx="9.8" cy="18.5" r="1.35" fill="#0066f5"/><path d="M13.4 9.5 H19 M13.4 14 H19 M13.4 18.5 H19" stroke="#0066f5" stroke-width="2.2" stroke-linecap="round"/></svg>
<div class="t" style="left:2258px;top:116px;font-size:28px;color:#0066f5;-webkit-text-stroke:0.6px #0066f5">发布设置</div>
<svg style="left:2428px;top:108px" width="40" height="40" viewBox="0 0 40 40"><path d="M13.6 7 L24.4 17.3 L16.4 25.4 L8.4 17.3 L15 10.8" fill="none" stroke="#1c1c1c" stroke-width="2.3"/><path d="M8.4 17.3 H24.4 L16.4 25.4Z" fill="#1c1c1c"/><path d="M27.8 20.8 C29 22.5 30.1 24 30.1 25.1 C30.1 26.4 29.1 27.2 27.8 27.2 C26.5 27.2 25.5 26.4 25.5 25.1 C25.5 24 26.6 22.5 27.8 20.8Z" fill="#1c1c1c"/><rect x="7.5" y="29.5" width="24.8" height="2.8" fill="#1c1c1c"/></svg>
<div class="t" style="left:2486px;top:116px;font-size:28px;color:#1c1c1c">样式中心</div>
<svg style="left:2663px;top:114px" width="27" height="28" viewBox="0 0 27 28"><rect x="2" y="2" width="23" height="24" rx="1" fill="none" stroke="#1a1a1a" stroke-width="2.6"/><path d="M7.5 2 V26 M7.5 9 H25" stroke="#1a1a1a" stroke-width="2.4"/></svg>
<div class="t" style="left:2714px;top:116px;font-size:28px;color:#1c1c1c">自定模板</div>
<!-- scrollbar -->
<div class="a" style="left:2880px;top:174px;width:2px;height:1430px;background:#efefef"></div>
<div class="a" style="left:2872px;top:174px;width:8px;height:1378px;background:#cbcbcb;border-radius:4px"></div>
<!-- cover -->
<svg style="left:2190px;top:201px" width="14" height="14" viewBox="0 0 14 14"><path d="M7 1V13M1.8 4L12.2 10M12.2 4L1.8 10" stroke="#ff4d4f" stroke-width="2.2"/></svg>
<div class="t" style="left:2212px;top:200px;font-size:28px;color:#1c1c1c">封面</div>
<div class="t" style="left:2284px;top:200px;font-size:28px;color:#1677ff">从文内选择</div>
<svg style="left:2190px;top:250px" width="471" height="201" viewBox="0 0 471 201"><rect x="1" y="1" width="468.5" height="198.5" rx="16" fill="none" stroke="#dedede" stroke-width="2" stroke-dasharray="10 6.5"/></svg>
<svg style="left:2405px;top:330px" width="40" height="40" viewBox="0 0 40 40"><path d="M20 0V40M0 20H40" stroke="#161616" stroke-width="4"/></svg>
<!-- author -->
<div class="t" style="left:2191px;top:500px;font-size:28px;color:#1c1c1c">作者</div>
<div class="a" style="left:2190px;top:550px;width:666px;height:64px;border:2px solid #d2d2d2;border-radius:12px"></div>
<div class="t" style="left:2214px;top:570px;font-size:28px;color:#bfbfbf">请输入作者</div>
<!-- summary -->
<div class="t" style="left:2191px;top:665px;font-size:28px;color:#1c1c1c">摘要</div>
<div class="a" style="left:2190px;top:714px;width:666px;height:196px;border:2px solid #d2d2d2;border-radius:12px"></div>
<div class="t" style="left:2214px;top:734px;font-size:28px;color:#bfbfbf">请输入摘要</div>
<div class="t" style="right:31px;top:916px;font-size:28px;color:#8c8c8c">0 / 120</div>
<!-- link -->
<div class="t" style="left:2191px;top:961px;font-size:28px;color:#1c1c1c">原文链接</div>
<div class="a" style="left:2190px;top:1010px;width:666px;height:64px;border:2px solid #d2d2d2;border-radius:12px"></div>
<div class="t" style="left:2214px;top:1030px;font-size:28px;color:#bfbfbf">请输入原文链接</div>
<!-- comments -->
<div class="t" style="left:2191px;top:1125px;font-size:28px;color:#1c1c1c">留言设置</div>
<div class="a" style="left:2190px;top:1174px;width:666px;height:80px;border:2px solid #e1e2e6;border-radius:12px"></div>
<div class="t" style="left:2207px;top:1203px;font-size:28px;color:#5e5e5e">留言和回复自动精选公开</div>
<svg style="left:2815px;top:1202px" width="18" height="25" viewBox="0 0 18 25"><path d="M2 1.5L15.5 12.5L2 23.5" fill="none" stroke="#6a6a6a" stroke-width="2.4"/></svg>
<!-- copyright -->
<div class="t" style="left:2191px;top:1305px;font-size:28px;color:#1c1c1c">版权设置</div>
<div class="a" style="left:2190px;top:1354px;width:666px;height:80px;border:2px solid #e1e2e6;border-radius:12px"></div>
<div class="t" style="left:2208px;top:1382px;font-size:28px;color:#5e5e5e">未声明</div>
<svg style="left:2815px;top:1382px" width="18" height="25" viewBox="0 0 18 25"><path d="M2 1.5L15.5 12.5L2 23.5" fill="none" stroke="#6a6a6a" stroke-width="2.4"/></svg>
<!-- render scheme -->
<div class="t" style="left:2191px;top:1485px;font-size:28px;color:#1c1c1c">渲染样式方案</div>
<svg style="left:2373px;top:1481px" width="30" height="30" viewBox="0 0 30 30"><circle cx="15" cy="15" r="13" fill="none" stroke="#1a1a1a" stroke-width="2.2"/><path d="M11 11.5 C11 9 12.8 7.5 15 7.5 C17.3 7.5 19 9 19 11.2 C19 13.5 16 14 15 16 V17.5" fill="none" stroke="#1a1a1a" stroke-width="2.2"/><circle cx="15" cy="21.5" r="1.5" fill="#1a1a1a"/></svg>
<div class="a" style="left:2190px;top:1550px;width:32px;height:32px;border-radius:50%;background:#0b66f5"></div>
<div class="a" style="left:2200px;top:1560px;width:12px;height:12px;border-radius:50%;background:#fff"></div>
<div class="t" style="left:2238px;top:1555px;font-size:28px;color:#1c1c1c">默认</div>
<svg style="left:2309px;top:1551px" width="30" height="30" viewBox="0 0 30 30"><circle cx="15" cy="15" r="13" fill="none" stroke="#1a1a1a" stroke-width="2.2"/><path d="M11 11.5 C11 9 12.8 7.5 15 7.5 C17.3 7.5 19 9 19 11.2 C19 13.5 16 14 15 16 V17.5" fill="none" stroke="#1a1a1a" stroke-width="2.2"/><circle cx="15" cy="21.5" r="1.5" fill="#1a1a1a"/></svg>
<div class="a" style="left:2370px;top:1550px;width:32px;height:32px;border-radius:50%;border:2px solid #d9d9d9;background:#fff"></div>
<div class="t" style="left:2418px;top:1555px;font-size:28px;color:#1c1c1c">紧凑</div>
<svg style="left:2489px;top:1551px" width="30" height="30" viewBox="0 0 30 30"><circle cx="15" cy="15" r="13" fill="none" stroke="#1a1a1a" stroke-width="2.2"/><path d="M11 11.5 C11 9 12.8 7.5 15 7.5 C17.3 7.5 19 9 19 11.2 C19 13.5 16 14 15 16 V17.5" fill="none" stroke="#1a1a1a" stroke-width="2.2"/><circle cx="15" cy="21.5" r="1.5" fill="#1a1a1a"/></svg>

</div>
</body>
</html>
